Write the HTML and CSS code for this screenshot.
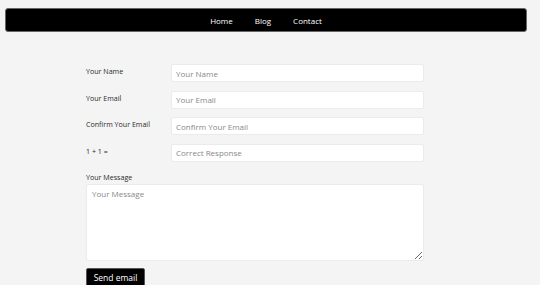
FILE: index.html
```html
<!DOCTYPE html>
<html lang="en">
<head>
    <meta charset="UTF-8">
    <meta name="viewport" content="width=device-width, initial-scale=1.0">
    <title>Contact</title>
    <link rel="stylesheet" href="styles.css">
</head>
<body>
    <nav class="topnav">
        <a href="#">Home</a>
        <a href="#">Blog</a>
        <a href="#">Contact</a>
    </nav>

    <form class="contact-form">
        <div class="fields">
            <label for="name">Your Name</label>
            <input type="text" id="name" placeholder="Your Name">

            <label for="email">Your Email</label>
            <input type="text" id="email" placeholder="Your Email">

            <label for="confirm">Confirm Your Email</label>
            <input type="text" id="confirm" placeholder="Confirm Your Email">

            <label for="check">1 + 1 =</label>
            <input type="text" id="check" placeholder="Correct Response">
        </div>

        <label class="msg-label" for="message">Your Message</label>
        <textarea id="message" placeholder="Your Message"></textarea>

        <button type="submit" class="send">Send email</button>
    </form>
</body>
</html>
```

FILE: styles.css
```css
body {
    margin: 0;
    background-color: #f4f4f4;
    font-family: "Open Sans", Arial, sans-serif;
    color: #333;
}

.topnav {
    margin: 8px 13px 0 5px;
    height: 24px;
    background-color: #000;
    border: 1px solid #666;
    border-radius: 3px;
    box-sizing: border-box;
    display: flex;
    justify-content: center;
    align-items: center;
    gap: 22px;
}

.topnav a {
    color: #fff;
    text-decoration: none;
    font-size: 8px;
}

.contact-form {
    width: 338px;
    margin: 32px 0 0 86px;
}

.fields {
    display: grid;
    grid-template-columns: 85px 1fr;
    row-gap: 8.5px;
}

.fields label {
    font-size: 7.1px;
    padding-top: 2px;
    line-height: 10px;
    color: #2a2a2a;
}

input,
textarea {
    font-family: "Open Sans", Arial, sans-serif;
    font-size: 8px;
    background-color: #fff;
    border: 1px solid #ebebeb;
    border-radius: 2px;
    box-sizing: border-box;
    color: #333;
}

input {
    height: 18px;
    padding: 0 4px;
}

input::placeholder,
textarea::placeholder {
    color: #888;
}

.msg-label {
    display: block;
    font-size: 7.1px;
    line-height: 10px;
    color: #2a2a2a;
    margin-top: 10px;
    margin-bottom: 2px;
}

textarea {
    display: block;
    width: 100%;
    height: 77px;
    padding: 3px 5px;
    resize: vertical;
}

.send {
    margin-top: 7px;
    padding: 0;
    width: 59px;
    height: 20px;
    background-color: #000;
    color: #fff;
    border: 1px solid #555;
    border-radius: 2px;
    font-family: "Open Sans", Arial, sans-serif;
    font-size: 8.5px;
    cursor: pointer;
}
```
